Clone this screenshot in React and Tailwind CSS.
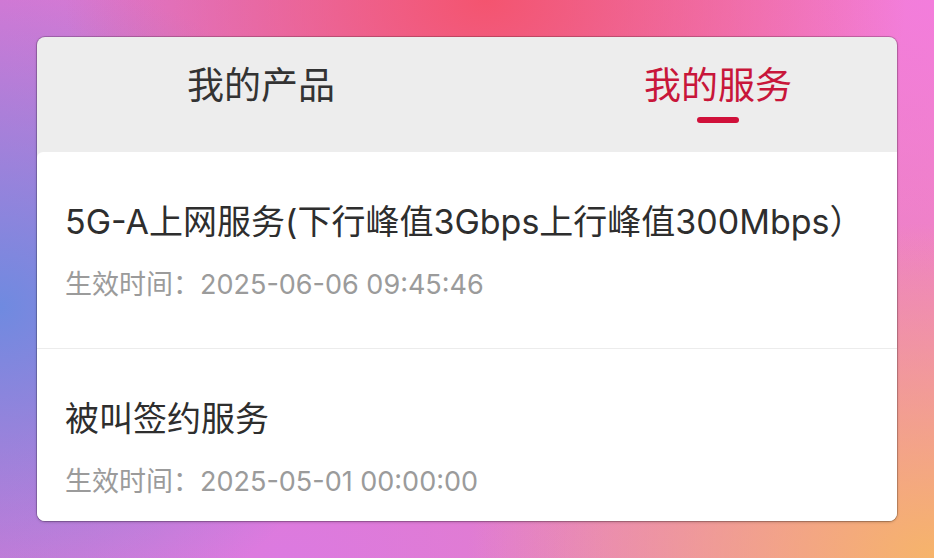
import React from 'react';

const font = { fontFamily: 'Inter, "Noto Sans CJK SC", "Noto Sans", sans-serif' };

const services = [
  { name: '5G-A上网服务(下行峰值3Gbps上行峰值300Mbps）', since: '2025-06-06 09:45:46' },
  { name: '被叫签约服务', since: '2025-05-01 00:00:00' },
];

const ServiceRow = ({ item, last }) => (
  <div className={`h-[197px] shrink-0 px-[28px] pt-[50px] ${last ? '' : 'border-b border-[#ececec]'}`}>
    <div className="text-[34px] leading-[40px] text-[#2e2e2e] whitespace-nowrap">{item.name}</div>
    <div className="mt-[28px] text-[27px] leading-[30px] text-[#9b9b9b] whitespace-nowrap">
      生效时间：{item.since}
    </div>
  </div>
);

export default function App() {
  return (
    <div
      style={font}
      className="w-[934px] h-[558px] overflow-hidden pt-[37px] pl-[37px] bg-[radial-gradient(ellipse_45%_55%_at_52%_0%,#f4546f_0%,transparent_100%),radial-gradient(ellipse_40%_60%_at_0%_55%,#6f8ae0_0%,transparent_100%),radial-gradient(ellipse_50%_60%_at_100%_100%,#f6b46a_0%,transparent_100%),radial-gradient(ellipse_40%_50%_at_100%_0%,#f37ddc_0%,transparent_100%),radial-gradient(ellipse_35%_40%_at_30%_100%,#dc7ae0_0%,transparent_100%),linear-gradient(90deg,#d877d4,#ee82c4)]"
    >
      <div className="w-[860px] h-[484px] rounded-[8px] overflow-hidden bg-[#ededed] flex flex-col shadow-[0_0_0_1px_rgba(0,0,0,0.18),0_1px_3px_rgba(0,0,0,0.25)]">
        {/* tabs */}
        <div className="h-[115px] shrink-0 flex justify-between pl-[150px] pr-[105px] pt-[30px]">
          <div className="flex flex-col items-center">
            <span className="text-[37px] leading-[37px] text-[#333]">我的产品</span>
          </div>
          <div className="flex flex-col items-center">
            <span className="text-[37px] leading-[37px] text-[#c8163a]">我的服务</span>
            <span className="mt-[13px] w-[42px] h-[6px] rounded-full bg-[#d0103a]" />
          </div>
        </div>

        {/* list */}
        <div className="flex-1 bg-white rounded-tl-[6px] flex flex-col overflow-hidden">
          {services.map((s, i) => (
            <ServiceRow key={s.name} item={s} last={i === services.length - 1} />
          ))}
        </div>
      </div>
    </div>
  );
}
